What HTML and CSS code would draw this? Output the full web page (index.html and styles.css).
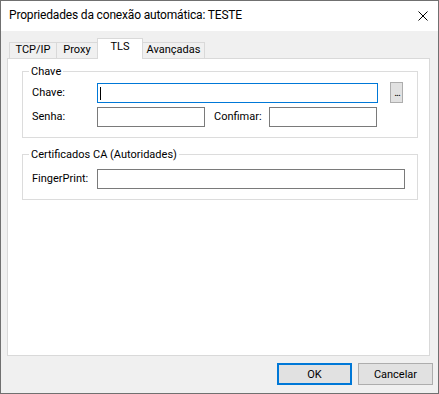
FILE: index.html
```html
<!DOCTYPE html>
<html lang="pt-BR">
<head>
<meta charset="utf-8">
<title>Propriedades da conexão automática: TESTE</title>
<link rel="stylesheet" href="styles.css">
</head>
<body>
<div class="window">
  <div class="titlebar">
    <span class="title">Propriedades da conexão automática: TESTE</span>
    <svg class="close" width="10" height="10" viewBox="0 0 10 10" aria-label="Fechar">
      <path d="M0.5 0.5 L9.5 9.5 M9.5 0.5 L0.5 9.5" stroke="#000" stroke-width="1" fill="none"/>
    </svg>
  </div>

  <div class="tabs">
    <div class="tab tab-tcp">TCP/IP</div>
    <div class="tab tab-proxy">Proxy</div>
    <div class="tab tab-tls active">TLS</div>
    <div class="tab tab-adv">Avançadas</div>
  </div>

  <div class="panel">
    <fieldset class="group group-key">
      <legend>Chave</legend>
      <div class="row row-first">
        <span class="label">Chave:</span>
        <div class="textbox textbox-focus w-key"><span class="caret"></span></div>
        <div class="browse">...</div>
      </div>
      <div class="row row-second">
        <span class="label">Senha:</span>
        <div class="textbox w-short"></div>
        <span class="label label-confirm">Confimar:</span>
        <div class="textbox w-short"></div>
      </div>
    </fieldset>

    <fieldset class="group group-ca">
      <legend>Certificados CA (Autoridades)</legend>
      <div class="row">
        <span class="label">FingerPrint:</span>
        <div class="textbox w-finger"></div>
      </div>
    </fieldset>
  </div>

  <div class="footer">
    <div class="btn btn-default">OK</div>
    <div class="btn">Cancelar</div>
  </div>
</div>
</body>
</html>
```

FILE: styles.css
```css
* {
  box-sizing: border-box;
}

html, body {
  margin: 0;
  padding: 0;
  background: #f0f0f0;
}

body {
  font-family: Roboto, "Liberation Sans", Arial, sans-serif;
  font-size: 11px;
  color: #000;
}

.window {
  width: 439px;
  height: 394px;
  border: 1px solid #707070;
  background: #f0f0f0;
  display: flex;
  flex-direction: column;
}

.titlebar {
  height: 30px;
  background: #fff;
  display: flex;
  justify-content: space-between;
  align-items: flex-start;
  padding: 7px 10px 0 8px;
}

.title {
  font-size: 12px;
  line-height: 14px;
  letter-spacing: -0.17px;
}

.close {
  margin-top: 3px;
  display: block;
}

.tabs {
  display: flex;
  align-items: flex-start;
  height: 21px;
  margin: 7px 0 -1px 8px;
  position: relative;
  z-index: 1;
}

.tab {
  margin-top: 4px;
  height: 16px;
  line-height: 14px;
  border: 1px solid #d9d9d9;
  border-bottom: none;
  background: #f0f0f0;
  text-align: center;
  white-space: nowrap;
}

.tab + .tab {
  margin-left: -1px;
}

.tab-tcp { width: 48px; }
.tab-proxy { width: 42px; }
.tab-tls { width: 46px; }
.tab-adv { width: 63px; }

.tab.active {
  margin-top: 0;
  height: 21px;
  padding-top: 1px;
  background: #fff;
  position: relative;
  z-index: 2;
}

.panel {
  margin-left: 6px;
  width: 423px;
  height: 298px;
  border: 1px solid #d9d9d9;
  background: #fff;
  display: flex;
  flex-direction: column;
  align-items: flex-start;
}

.group {
  margin: 0 0 0 14px;
  width: 396px;
  border: 1px solid #dcdcdc;
  padding: 3px 0 10px 6px;
  min-width: 0;
}

.group legend {
  padding: 2px 2px 0;
  line-height: 14px;
}

.group-key {
  margin-top: 4px;
}

.group-ca {
  margin-top: 8px;
  padding-top: 7px;
}

.row {
  display: flex;
  align-items: flex-start;
  padding-left: 3px;
  height: 20px;
}

.row-first {
  height: 21px;
}

.row-first .label,
.row-first .textbox {
  margin-top: 1px;
}

.row-second {
  margin-top: 4px;
}

.label {
  width: 65px;
  line-height: 20px;
  white-space: nowrap;
}

.label-confirm {
  width: 55px;
  margin-left: 9px;
}

.textbox {
  height: 20px;
  border: 1px solid #7a7a7a;
  background: #fff;
  display: flex;
  align-items: center;
  padding-left: 2px;
}

.textbox-focus {
  border-color: #0078d7;
}

.caret {
  display: block;
  width: 1px;
  height: 13px;
  background: #000;
}

.w-key { width: 281px; }
.w-short { width: 108px; }
.w-finger { width: 308px; }

.browse {
  width: 13px;
  height: 21px;
  margin-left: 12px;
  border: 1px solid #adadad;
  background: #e1e1e1;
  text-align: center;
  line-height: 19px;
  font-size: 11px;
  letter-spacing: -1px;
  padding-left: 1px;
}

.footer {
  display: flex;
  justify-content: flex-end;
  gap: 6px;
  margin-top: 7px;
  padding-right: 5px;
}

.btn {
  width: 75px;
  height: 22px;
  border: 1px solid #adadad;
  background: #e1e1e1;
  text-align: center;
  line-height: 19px;
  padding-top: 1px;
}

.btn-default {
  border: 2px solid #0078d7;
  line-height: 17px;
}
```
